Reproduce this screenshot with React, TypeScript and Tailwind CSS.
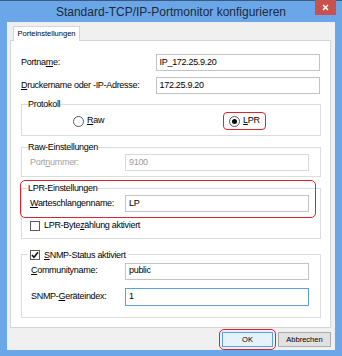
import React from "react";

const ui = "font-['Liberation_Sans',Arial,sans-serif]";

function Field({ value, focused = false, disabled = false, className = "" }: { value: string; focused?: boolean; disabled?: boolean; className?: string }) {
  return (
    <div
      className={`h-[17px] bg-white border flex items-center px-[3px] ${
        focused ? "border-[#5c9ee0]" : disabled ? "border-[#d9d9d9] text-[#9a9a9a]" : "border-[#c3c3c3] text-black"
      } ${className}`}
    >
      {value}
    </div>
  );
}

function Radio({ checked = false }: { checked?: boolean }) {
  return (
    <span className="w-[11px] h-[11px] rounded-full border border-[#5a5a5a] bg-white flex items-center justify-center">
      {checked && <span className="w-[5px] h-[5px] rounded-full bg-black" />}
    </span>
  );
}

function Check({ checked = false }: { checked?: boolean }) {
  return (
    <span className="w-[10px] h-[10px] border border-[#5a5a5a] bg-white flex items-center justify-center">
      {checked && (
        <svg width="8" height="8" viewBox="0 0 8 8">
          <path d="M1 4 L3 6.2 L7 1.2" fill="none" stroke="#111" strokeWidth="1.6" />
        </svg>
      )}
    </span>
  );
}

export default function App() {
  return (
    <div className={`w-[342px] h-[356px] bg-[#6aa6e8] border-t border-[#3a5a80] flex flex-col ${ui}`}>
      {/* Title bar */}
      <div className="relative h-[21px] flex items-center justify-center">
        <span className="text-[12px] text-[#1b2a3a] leading-none">Standard-TCP/IP-Portmonitor konfigurieren</span>
        <div className="absolute right-[6px] top-[-1px] w-[21px] h-[15px] bg-[#c8514c] flex items-center justify-center">
          <svg width="7" height="7" viewBox="0 0 7 7">
            <path d="M1 1 L6 6 M6 1 L1 6" stroke="#fff" strokeWidth="1.5" />
          </svg>
        </div>
      </div>

      {/* Client area */}
      <div className="mx-[7px] h-[328px] bg-[#f0f0f0] flex flex-col pl-[3px] pr-[4px] pt-[4px]">
        {/* Tab strip */}
        <div className="flex pl-[3px] h-[14px]">
          <div className="w-[67px] h-[15px] bg-white border border-b-0 border-[#d5d5d5] flex items-center justify-center text-[7.5px] text-black relative z-10">
            Porteinstellungen
          </div>
        </div>

        {/* Panel */}
        <div className="h-[289px] bg-white border border-[#d5d5d5] px-[10px] pt-[13px] flex flex-col text-[9px] tracking-[-0.3px] text-black">
          <div className="flex items-center">
            <span className="w-[135px]">Portna<u>m</u>e:</span>
            <Field value="IP_172.25.9.20" className="w-[165px]" />
          </div>
          <div className="flex items-center mt-[6px]">
            <span className="w-[135px]"><u>D</u>ruckername oder -IP-Adresse:</span>
            <Field value="172.25.9.20" className="w-[165px]" />
          </div>

          {/* Protokoll */}
          <fieldset className="mt-[3px] border border-[#dcdcdc] pl-[6px] pb-[5px] w-[300px]">
            <legend className="leading-[14px] px-0">Protokoll</legend>
            <div className="flex items-center h-[18px] mt-[1px]">
              <div className="ml-[45px] flex items-center gap-[3px]">
                <Radio />
                <span><u>R</u>aw</span>
              </div>
              <div className="ml-[119px] flex items-center gap-[3px] border-[1.5px] border-[#d9262c] rounded-[4px] h-[18px] px-[5px]">
                <Radio checked />
                <span><u>L</u>PR</span>
              </div>
            </div>
          </fieldset>

          {/* Raw-Einstellungen */}
          <fieldset className="mt-[4px] border border-[#dcdcdc] pl-[6px] pb-[5px] w-[300px]">
            <legend className="leading-[14px] px-0">Raw-Einstellungen</legend>
            <div className="flex items-center ml-[2px]">
              <span className="w-[95px] text-[#a3a3a3]">Port<u>n</u>ummer:</span>
              <Field value="9100" disabled className="w-[184px]" />
            </div>
          </fieldset>

          {/* LPR-Einstellungen */}
          <div className="relative mt-[4px]">
            <fieldset className="border border-[#dcdcdc] pl-[6px] pb-[5px] w-[300px]">
              <legend className="leading-[14px] px-0">LPR-Einstellungen</legend>
              <div className="flex items-center ml-[2px]">
                <span className="w-[95px]"><u>W</u>arteschlangenname:</span>
                <Field value="LP" className="w-[184px]" />
              </div>
              <div className="flex items-center gap-[4px] mt-[7px] ml-[2px]">
                <Check />
                <span>LPR-Byte<u>z</u>ählung aktiviert</span>
              </div>
            </fieldset>
            <div className="absolute left-[-1px] top-[-1px] w-[296px] h-[38px] border-[1.5px] border-[#d9262c] rounded-[5px] pointer-events-none" />
          </div>

          {/* SNMP */}
          <fieldset className="mt-[9px] border border-[#dcdcdc] pl-[6px] pb-[11px] w-[300px]">
            <legend className="leading-[14px] px-0 pr-[2px]">
              <span className="flex items-center gap-[4px] ml-[2px]">
                <Check checked />
                <span><u>S</u>NMP-Status aktiviert</span>
              </span>
            </legend>
            <div className="flex items-center ml-[3px] mt-[1px]">
              <span className="w-[94px]"><u>C</u>ommunityname:</span>
              <Field value="public" className="w-[184px]" />
            </div>
            <div className="flex items-center ml-[3px] mt-[8px]">
              <span className="w-[94px]">SNMP-<u>G</u>eräteindex:</span>
              <Field value="1" focused className="w-[184px] h-[18px]" />
            </div>
          </fieldset>
        </div>

        {/* Buttons */}
        <div className="flex justify-end items-center mt-[1px] gap-[2px] text-[7.5px]">
          <div className="border-[1.5px] border-[#d9262c] rounded-[5px] p-[2px]">
            <div className="w-[51px] h-[15px] border border-[#5b9fe0] bg-[#e5f1fb] flex items-center justify-center">OK</div>
          </div>
          <div className="w-[53px] h-[15px] border border-[#adadad] bg-[#e1e1e1] flex items-center justify-center">Abbrechen</div>
        </div>
      </div>
    </div>
  );
}
